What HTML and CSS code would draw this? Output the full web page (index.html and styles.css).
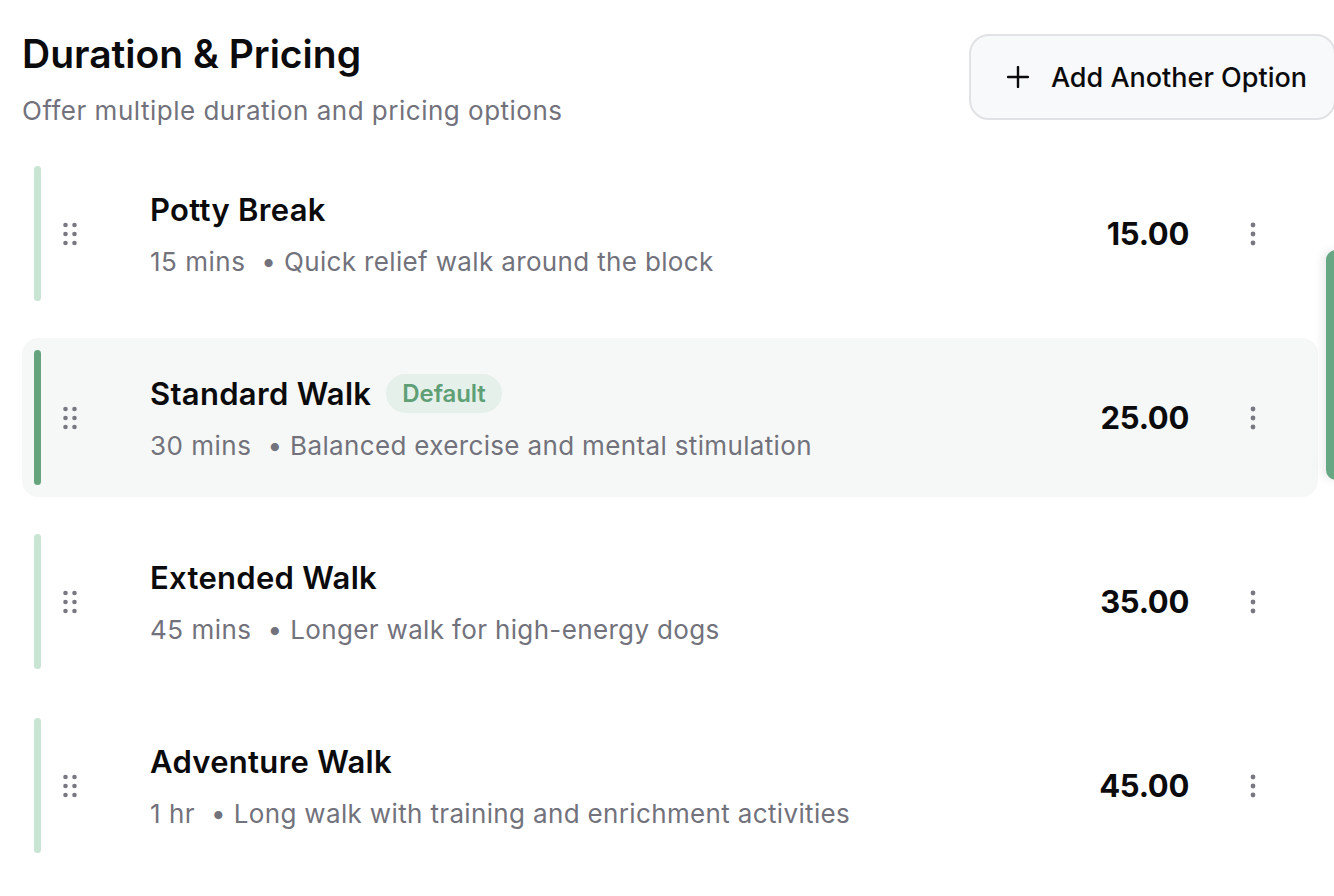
FILE: index.html
```html
<!DOCTYPE html>
<html lang="en">
<head>
<meta charset="utf-8">
<title>Duration &amp; Pricing</title>
<link rel="stylesheet" href="styles.css">
</head>
<body>
<div class="page">
  <header class="head">
    <div class="head-text">
      <h1 class="title">Duration &amp; Pricing</h1>
      <p class="subtitle">Offer multiple duration and pricing options</p>
    </div>
    <button class="add-btn" type="button">
      <svg class="plus" viewBox="0 0 22 22" width="22" height="22" aria-hidden="true"><path d="M11 1v20M1 11h20" stroke="currentColor" stroke-width="2.4" stroke-linecap="round" fill="none"/></svg>
      <span>Add Another Option</span>
    </button>
  </header>

  <ul class="options">
    <li class="option">
      <span class="accent"></span>
      <span class="grip"><svg viewBox="0 0 15 24" width="15" height="24" aria-hidden="true"><circle cx="2.5" cy="3" r="2.3"/><circle cx="11.5" cy="3" r="2.3"/><circle cx="2.5" cy="12" r="2.3"/><circle cx="11.5" cy="12" r="2.3"/><circle cx="2.5" cy="21" r="2.3"/><circle cx="11.5" cy="21" r="2.3"/></svg></span>
      <div class="info">
        <div class="name-row"><span class="name">Potty Break</span></div>
        <div class="meta"><span class="dur">15 mins</span><span class="desc">• Quick relief walk around the block</span></div>
      </div>
      <div class="price">15.00</div>
      <button class="more" type="button" aria-label="More"><svg viewBox="0 0 6 24" width="6" height="24" aria-hidden="true"><circle cx="3" cy="3" r="2.4"/><circle cx="3" cy="12" r="2.4"/><circle cx="3" cy="21" r="2.4"/></svg></button>
    </li>
    <li class="option option--default">
      <span class="accent"></span>
      <span class="grip"><svg viewBox="0 0 15 24" width="15" height="24" aria-hidden="true"><circle cx="2.5" cy="3" r="2.3"/><circle cx="11.5" cy="3" r="2.3"/><circle cx="2.5" cy="12" r="2.3"/><circle cx="11.5" cy="12" r="2.3"/><circle cx="2.5" cy="21" r="2.3"/><circle cx="11.5" cy="21" r="2.3"/></svg></span>
      <div class="info">
        <div class="name-row"><span class="name">Standard Walk</span><span class="badge">Default</span></div>
        <div class="meta"><span class="dur">30 mins</span><span class="desc">• Balanced exercise and mental stimulation</span></div>
      </div>
      <div class="price">25.00</div>
      <button class="more" type="button" aria-label="More"><svg viewBox="0 0 6 24" width="6" height="24" aria-hidden="true"><circle cx="3" cy="3" r="2.4"/><circle cx="3" cy="12" r="2.4"/><circle cx="3" cy="21" r="2.4"/></svg></button>
    </li>
    <li class="option">
      <span class="accent"></span>
      <span class="grip"><svg viewBox="0 0 15 24" width="15" height="24" aria-hidden="true"><circle cx="2.5" cy="3" r="2.3"/><circle cx="11.5" cy="3" r="2.3"/><circle cx="2.5" cy="12" r="2.3"/><circle cx="11.5" cy="12" r="2.3"/><circle cx="2.5" cy="21" r="2.3"/><circle cx="11.5" cy="21" r="2.3"/></svg></span>
      <div class="info">
        <div class="name-row"><span class="name">Extended Walk</span></div>
        <div class="meta"><span class="dur">45 mins</span><span class="desc">• Longer walk for high-energy dogs</span></div>
      </div>
      <div class="price">35.00</div>
      <button class="more" type="button" aria-label="More"><svg viewBox="0 0 6 24" width="6" height="24" aria-hidden="true"><circle cx="3" cy="3" r="2.4"/><circle cx="3" cy="12" r="2.4"/><circle cx="3" cy="21" r="2.4"/></svg></button>
    </li>
    <li class="option">
      <span class="accent"></span>
      <span class="grip"><svg viewBox="0 0 15 24" width="15" height="24" aria-hidden="true"><circle cx="2.5" cy="3" r="2.3"/><circle cx="11.5" cy="3" r="2.3"/><circle cx="2.5" cy="12" r="2.3"/><circle cx="11.5" cy="12" r="2.3"/><circle cx="2.5" cy="21" r="2.3"/><circle cx="11.5" cy="21" r="2.3"/></svg></span>
      <div class="info">
        <div class="name-row"><span class="name">Adventure Walk</span></div>
        <div class="meta"><span class="dur">1 hr</span><span class="desc">• Long walk with training and enrichment activities</span></div>
      </div>
      <div class="price">45.00</div>
      <button class="more" type="button" aria-label="More"><svg viewBox="0 0 6 24" width="6" height="24" aria-hidden="true"><circle cx="3" cy="3" r="2.4"/><circle cx="3" cy="12" r="2.4"/><circle cx="3" cy="21" r="2.4"/></svg></button>
    </li>
  </ul>

  <div class="side-tab" aria-hidden="true"></div>
</div>
</body>
</html>
```

FILE: styles.css
```css
* { box-sizing: border-box; }

html, body {
  margin: 0;
  padding: 0;
  background: #ffffff;
  overflow: hidden;
}

body {
  font-family: Inter, "Noto Sans", "Liberation Sans", sans-serif;
  color: #0b0b0d;
}

.page {
  position: relative;
  width: 1334px;
  height: 896px;
  padding: 31px 0 0 22px;
}

.head {
  display: flex;
  justify-content: space-between;
  align-items: flex-start;
  margin-bottom: 27px;
}

.title {
  margin: 0;
  font-size: 39px;
  line-height: 46px;
  font-weight: 600;
  letter-spacing: 0;
}

.subtitle {
  margin: 18px 0 0;
  font-size: 26px;
  line-height: 32px;
  color: #72727c;
  letter-spacing: 0.5px;
}

.add-btn {
  display: flex;
  align-items: center;
  gap: 22px;
  height: 86px;
  margin-top: 3px;
  margin-right: -2px;
  padding: 0 27px 0 36px;
  border: 2px solid #e1e2e5;
  border-radius: 20px;
  background: #f8f9fa;
  color: #0b0b0d;
  font-family: inherit;
  font-size: 27px;
  font-weight: 500;
  letter-spacing: 0;
}

.plus { flex: none; }

.options {
  list-style: none;
  margin: 0;
  padding: 0;
  width: 1296px;
  display: flex;
  flex-direction: column;
  gap: 25px;
}

.option {
  display: flex;
  align-items: center;
  height: 159px;
  padding: 12px 0 12px 12px;
  border-radius: 16px;
}

.option--default {
  background: #f6f8f7;
}

.accent {
  flex: none;
  width: 7px;
  height: 135px;
  border-radius: 4px;
  background: #c8e5d3;
}

.option--default .accent {
  background: #65a47d;
}

.grip {
  flex: none;
  display: flex;
  margin-left: 22px;
  fill: #787882;
}

.info {
  flex: 1;
  margin-left: 72px;
  display: flex;
  flex-direction: column;
  gap: 17px;
}

.name-row {
  display: flex;
  align-items: center;
  gap: 15px;
  height: 40px;
}

.name {
  font-size: 31px;
  font-weight: 600;
  letter-spacing: 0.3px;
}

.badge {
  display: inline-flex;
  align-items: center;
  height: 39px;
  padding: 0 16px;
  border-radius: 20px;
  background: #e6f0ea;
  color: #5e9f76;
  font-size: 24px;
  font-weight: 600;
  letter-spacing: -0.1px;
}

.meta {
  font-size: 26px;
  color: #72727c;
  letter-spacing: 0.5px;
  line-height: 32px;
}

.dur {
  margin-right: 16px;
}

.desc {
  letter-spacing: 0.35px;
}

.price {
  flex: none;
  font-size: 31px;
  font-weight: 700;
  letter-spacing: -0.3px;
  margin-right: 49px;
}

.more {
  flex: none;
  display: flex;
  align-items: center;
  justify-content: center;
  width: 30px;
  height: 40px;
  margin-right: 50px;
  padding: 0;
  border: 0;
  background: transparent;
  fill: #787882;
}

.side-tab {
  position: absolute;
  left: 1326px;
  top: 250px;
  width: 30px;
  height: 230px;
  border-radius: 10px;
  background: #68a783;
  box-shadow: -4px 0 10px rgba(0, 0, 0, 0.08);
}
```
